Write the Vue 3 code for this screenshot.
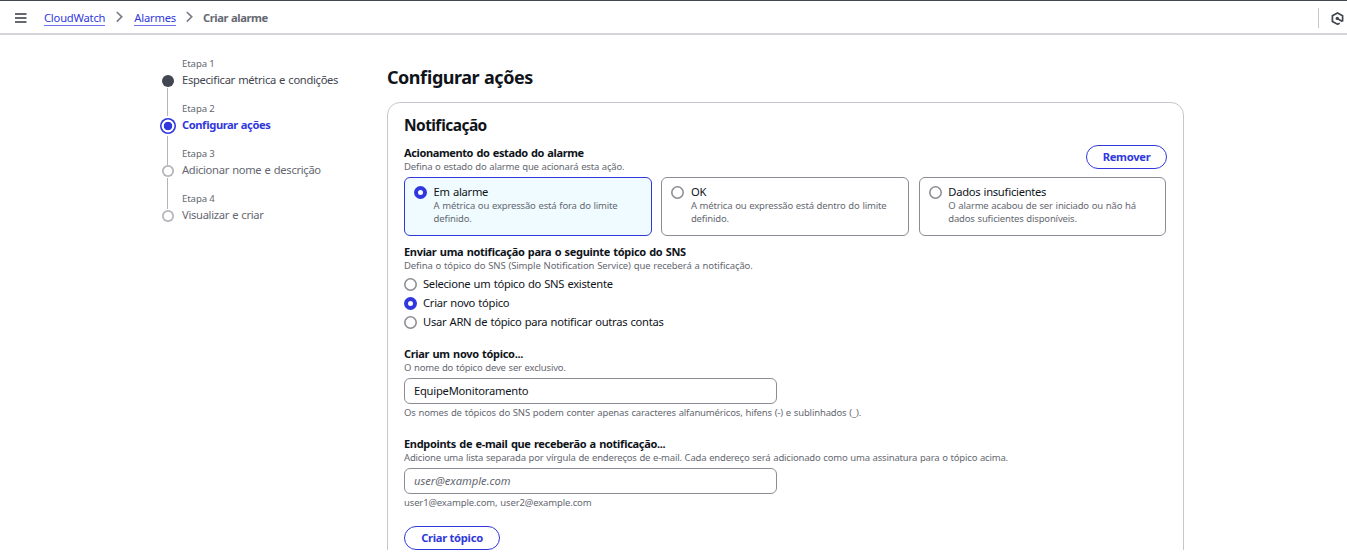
<script setup>
import { ref } from 'vue'

const steps = [
  { n: 'Etapa 1', title: 'Especificar métrica e condições', state: 'done' },
  { n: 'Etapa 2', title: 'Configurar ações', state: 'active' },
  { n: 'Etapa 3', title: 'Adicionar nome e descrição', state: 'todo' },
  { n: 'Etapa 4', title: 'Visualizar e criar', state: 'todo' }
]
const states = [
  { id: 'alarm', title: 'Em alarme', lines: ['A métrica ou expressão está fora do limite', 'definido.'] },
  { id: 'ok', title: 'OK', lines: ['A métrica ou expressão está dentro do limite', 'definido.'] },
  { id: 'nodata', title: 'Dados insuficientes', lines: ['O alarme acabou de ser iniciado ou não há', 'dados suficientes disponíveis.'] }
]
const topics = [
  { id: 'existing', title: 'Selecione um tópico do SNS existente' },
  { id: 'new', title: 'Criar novo tópico' },
  { id: 'arn', title: 'Usar ARN de tópico para notificar outras contas' }
]
const state = ref('alarm')
const topic = ref('new')
const topicName = ref('EquipeMonitoramento')
const emails = ref('')
</script>

<template>
  <div class="page">
    <header class="bar">
      <svg class="menu" width="12" height="12" viewBox="0 0 12 12"><path d="M0 2h11.5M0 6h11.5M0 10h11.5" /></svg>
      <nav class="crumbs">
        <a>CloudWatch</a>
        <svg class="chev" width="7" height="12" viewBox="0 0 7 12"><path d="M.8 1 5.7 5.8.8 10.6" /></svg>
        <a>Alarmes</a>
        <svg class="chev last" width="7" height="12" viewBox="0 0 7 12"><path d="M.8 1 5.7 5.8.8 10.6" /></svg>
        <b>Criar alarme</b>
      </nav>
      <div class="tools">
        <svg width="13" height="13" viewBox="0 0 13 13">
          <path d="M8.8 11.3 6.5 12.2 1.4 9.5V3.7L6.5 1l5.1 2.7v5.8" />
          <path d="m6.2 6.4 5.2 3" /><circle cx="6.3" cy="6.4" r="1.7" />
        </svg>
      </div>
    </header>

    <div class="body">
      <ol class="steps">
        <li v-for="s in steps" :key="s.n" :class="s.state">
          <div class="rail"><i class="dot"></i><i class="line"></i></div>
          <div><span class="num">{{ s.n }}</span><span class="name">{{ s.title }}</span></div>
        </li>
      </ol>

      <main>
        <h1>Configurar ações</h1>
        <section class="card">
          <h2>Notificação</h2>
          <div class="row">
            <div>
              <div class="label trigger">Acionamento do estado do alarme</div>
              <div class="desc">Defina o estado do alarme que acionará esta ação.</div>
            </div>
            <button class="btn remove">Remover</button>
          </div>
          <div class="tiles">
            <div v-for="t in states" :key="t.id" class="tile" :class="{ on: state === t.id }" @click="state = t.id">
              <i class="radio" :class="{ on: state === t.id }"></i>
              <div>
                <div class="text">{{ t.title }}</div>
                <div v-for="l in t.lines" :key="l" class="desc">{{ l }}</div>
              </div>
            </div>
          </div>

          <div class="field sns">
            <div class="label">Enviar uma notificação para o seguinte tópico do SNS</div>
            <div class="desc">Defina o tópico do SNS (Simple Notification Service) que receberá a notificação.</div>
            <div class="options">
              <div v-for="t in topics" :key="t.id" class="option" @click="topic = t.id">
                <i class="radio" :class="{ on: topic === t.id }"></i><span class="text">{{ t.title }}</span>
              </div>
            </div>
          </div>

          <div class="field topic">
            <div class="label">Criar um novo tópico...</div>
            <div class="desc">O nome do tópico deve ser exclusivo.</div>
            <input v-model="topicName" />
            <div class="desc hint">Os nomes de tópicos do SNS podem conter apenas caracteres alfanuméricos, hifens (-) e sublinhados (_).</div>
          </div>

          <div class="field mail">
            <div class="label">Endpoints de e-mail que receberão a notificação...</div>
            <div class="desc">Adicione uma lista separada por vírgula de endereços de e-mail. Cada endereço será adicionado como uma assinatura para o tópico acima.</div>
            <input v-model="emails" placeholder="user@example.com" />
            <div class="desc hint">user1@example.com, user2@example.com</div>
          </div>
          <button class="btn create">Criar tópico</button>
        </section>
      </main>
    </div>
  </div>
</template>

<style>
html, body { overflow: hidden; background: #fff; }
</style>

<style scoped>
* { box-sizing: border-box; }
.page { height: 550px; overflow: hidden; font-family: "Noto Sans", "Open Sans", sans-serif; font-size: 11.2px; font-feature-settings: "liga" 1; color: #0f141a; background: #fff; border-top: 1px solid #424650; }
.bar { height: 34px; display: flex; align-items: center; padding-left: 15px; border-bottom: 2px solid #d5d5d9; }
.menu { stroke: #656871; stroke-width: 1.9; fill: none; margin-right: 17px; margin-top: 1px; }
.crumbs { display: flex; align-items: center; line-height: 14px; padding-top: 2px; letter-spacing: -.2px; }
.crumbs a { color: #3038dd; height: 15px; border-bottom: 1px solid #6c72e8; }
.crumbs b { color: #656871; letter-spacing: -.45px; word-spacing: .6px; }
.chev { margin: -2px 11px 0; fill: none; stroke: #7d808a; stroke-width: 1.7; }
.chev.last { margin: -2px 10px 0 10px; }
.tools { margin-left: auto; width: 29px; height: 20px; border-left: 1px solid #c6c6cd; padding: 4px 0 0 12px; margin-top: 1px; }
.tools svg { display: block; fill: none; stroke: #424650; stroke-width: 1.7; }
.tools circle { fill: #424650; stroke: none; }
.body { display: flex; padding-left: 160px; }
.steps { list-style: none; margin: 22px 0 0; padding: 0; width: 227px; }
.steps li { display: flex; height: 45px; }
.rail { width: 16px; margin-right: 6px; display: flex; flex-direction: column; align-items: center; padding-top: 18px; position: relative; }
.dot { flex: none; width: 12px; height: 12px; border-radius: 50%; box-shadow: inset 0 0 0 1.7px #b4b4bb; }
.done .dot { background: #424650; box-shadow: none; }
.active .rail { padding-top: 16px; }
.active .dot { width: 16px; height: 16px; box-shadow: inset 0 0 0 1.6px #3038dd; background: radial-gradient(circle, #3038dd 3.9px, transparent 4.6px); }
.line { position: absolute; left: 7px; top: 31px; width: 1px; height: 31px; background: #b4b4bb; }
.active .line { top: 34px; height: 29px; }
.done .line { height: 28px; }
.steps li:last-child .line { display: none; }
.num, .name { display: block; white-space: nowrap; }
.num { font-size: 9.6px; line-height: 14px; color: #656871; letter-spacing: -.1px; }
.name { line-height: 18px; color: #656871; letter-spacing: -.31px; word-spacing: .6px; }
.done .name { color: #424650; }
.active .name { color: #3038dd; font-weight: 700; letter-spacing: -.46px; }
main { width: 797px; }
h1 { margin: 30px 0 12px; font-size: 18px; line-height: 25px; font-weight: 700; letter-spacing: -.47px; word-spacing: .6px; }
.card { border: 1px solid #c6c6cd; border-radius: 13px; height: 600px; padding: 10px 16px 0; }
h2 { margin: 0; font-size: 15.5px; line-height: 24px; font-weight: 700; letter-spacing: -.58px; }
.row { display: flex; justify-content: space-between; height: 31px; margin-top: 9px; }
.label { font-size: 11px; font-weight: 700; line-height: 14px; white-space: nowrap; letter-spacing: -.32px; word-spacing: .8px; }
.trigger { letter-spacing: -.38px; }
.desc { font-size: 9.5px; line-height: 13px; color: #656871; white-space: nowrap; letter-spacing: -.188px; word-spacing: .5px; }
.btn { display: block; height: 24px; border: 1px solid #3038dd; border-radius: 12px; background: #fff; color: #3038dd; font: 700 11.2px/20px "Noto Sans", sans-serif; letter-spacing: -.29px; padding: 0 0 1px; }
.remove { width: 81px; margin-top: -1px; }
.create { width: 96px; margin-top: -1px; }
.tiles { display: grid; grid-template-columns: repeat(3, 1fr); gap: 9.6px; width: 762.4px; }
.tile { height: 59px; border: 1px solid #8c8c94; border-radius: 6px; display: flex; gap: 6.6px; padding: 7px 9px; }
.tile.on { border-color: #3038dd; background: #effbff; }
.tile .text { line-height: 14px; }
.tile .desc { letter-spacing: -.17px; }
.text { letter-spacing: -.28px; word-spacing: .6px; }
.radio { flex: none; width: 13px; height: 13px; box-shadow: inset 0 0 0 1.6px #8c8c94; border-radius: 50%; background: #fff; }
.tile .radio { margin-top: 1px; }
.radio.on { box-shadow: inset 0 0 0 4px #3038dd; }
.field { height: 90px; }
.sns { margin-top: 9px; height: 102px; }
.sns .desc { letter-spacing: -.11px; }
.options { padding-top: 2px; }
.option { display: flex; align-items: center; gap: 6px; height: 19px; }
.option .radio { margin-top: 1px; }
input { display: block; width: 373px; height: 26px; margin: 4px 0 2px; border: 1px solid #8c8c94; border-radius: 6px; padding: 0 9px 2px; font: 11.2px "Noto Sans", sans-serif; letter-spacing: -.24px; color: #0f141a; outline: none; background: #fff; }
input::placeholder { color: #656871; font-style: italic; opacity: 1; letter-spacing: -.02px; }
.hint { letter-spacing: -.155px; }
.mail .hint { letter-spacing: -.14px; }
</style>
